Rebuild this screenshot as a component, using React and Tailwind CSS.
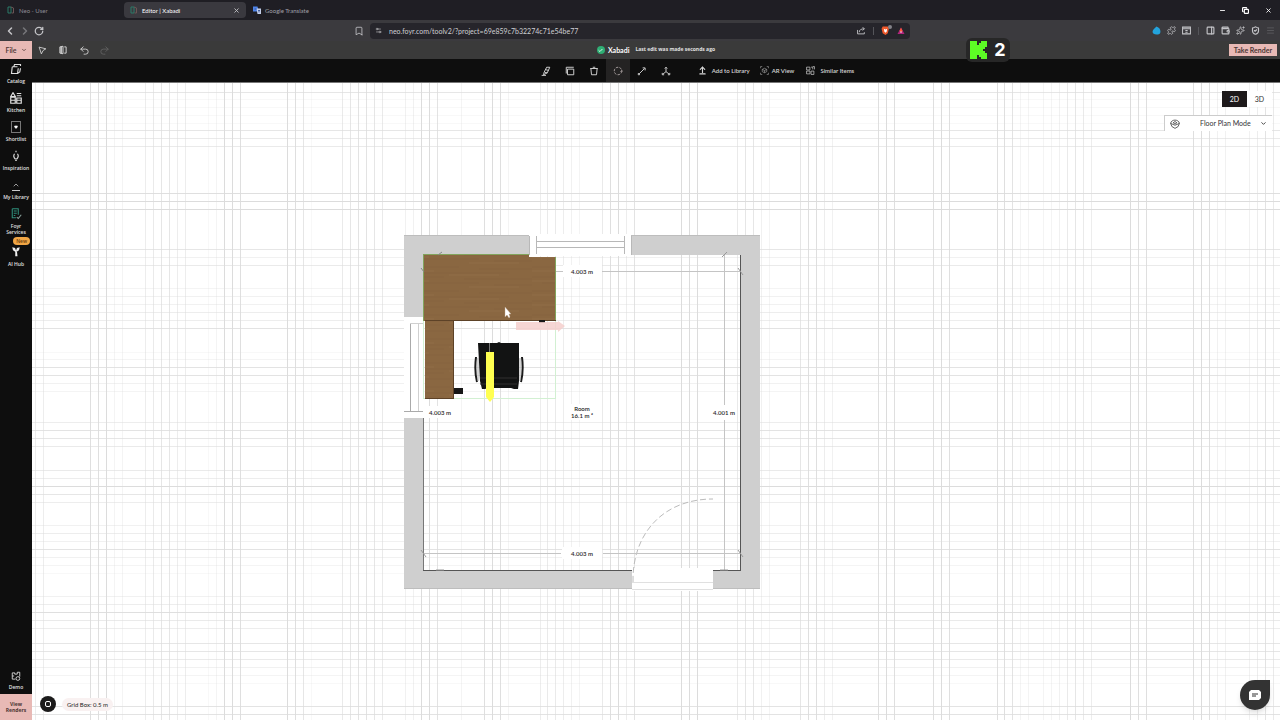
import { useState } from 'react';
import {
  ArrowUpFromLine,
  Bookmark,
  Check,
  ChevronDown,
  ChevronLeft,
  ChevronRight,
  ChevronUp,
  Copy,
  Heart,
  Menu,
  Minus,
  PanelRight,
  Puzzle,
  Redo2,
  RotateCw,
  Settings2,
  ShieldCheck,
  Sparkles,
  Undo2,
  Wallet,
  X
} from 'lucide-react';

// Strong and faint grid lines: [position, opacity]
const verticalLines = [
  [35, 0.5], [43, 0.5], [90, 0.9], [98, 0.9], [106, 1], [114, 0.3], [122, 0.3], [145, 0.5],
  [153, 0.6], [161, 0.7], [169, 0.7], [177, 0.5], [185, 0.5], [208, 0.2], [216, 0.3], [224, 1],
  [232, 1], [240, 0.9], [287, 1], [295, 0.9], [303, 0.7], [311, 0.2], [342, 0.6], [350, 0.7],
  [358, 0.8], [366, 0.8], [374, 0.7], [382, 0.6], [405, 0.4], [413, 0.4], [421, 1], [429, 1],
  [437, 0.8], [461, 0.3], [484, 0.9], [492, 1], [500, 0.9], [508, 0.3], [540, 0.5], [547, 0.6],
  [555, 0.6], [563, 0.5], [571, 0.4], [579, 0.3], [602, 0.6], [610, 0.9], [618, 1], [626, 0.5],
  [634, 0.8], [681, 1], [689, 1], [697, 1], [737, 0.6], [745, 0.7], [753, 0.7], [761, 0.4],
  [769, 0.3], [800, 0.7], [808, 0.9], [816, 0.9], [824, 0.5], [832, 0.4], [878, 0.9], [886, 1],
  [894, 0.9], [933, 0.9], [941, 1], [949, 0.9], [997, 0.9], [1004, 0.9], [1012, 0.8], [1020, 0.3],
  [1028, 0.3], [1043, 0.3], [1051, 0.3], [1059, 0.4], [1067, 0.6], [1075, 0.7], [1083, 0.6],
  [1091, 0.5], [1130, 1], [1138, 0.9], [1146, 0.9], [1193, 0.9], [1201, 1], [1209, 0.9],
  [1217, 0.4], [1225, 0.4], [1249, 0.4], [1257, 0.5], [1265, 0.8], [1273, 0.6]
];

const horizontalLines = [
  [92, 0.7], [99, 0.2], [107, 0.2], [115, 0.2], [123, 0.2], [130, 0.7], [138, 0.6], [146, 0.6],
  [193, 0.9], [201, 1], [209, 1], [249, 0.7], [257, 0.4], [265, 0.6], [288, 0.3], [296, 0.4],
  [304, 0.4], [312, 0.5], [320, 0.5], [328, 0.8], [352, 0.2], [359, 0.3], [367, 0.8], [375, 0.8],
  [383, 0.4], [391, 0.3], [422, 0.5], [430, 0.8], [438, 0.7], [446, 0.6], [470, 0.6], [478, 0.5],
  [486, 1], [494, 0.7], [502, 0.5], [525, 0.4], [533, 0.5], [541, 0.4], [549, 0.8], [557, 0.4],
  [565, 0.3], [573, 0.2], [596, 0.4], [604, 0.5], [612, 0.9], [620, 0.6], [628, 0.5], [643, 0.7],
  [651, 0.7], [659, 0.6], [667, 0.4], [675, 0.3], [683, 0.2], [706, 0.8], [714, 0.8]
];

const CabinetIcon = ({ className }) => (
  <svg viewBox="0 0 16 16" className={className} fill="none" stroke="currentColor" strokeWidth="1.6">
    <path d="M1 6l3-5 3 5zM1 7h6v8H1zM1 11h6M9 8h6v7H9zM9 11h6M9 5h6M9 2h6" />
  </svg>
);

const ServicesIcon = ({ className }) => (
  <svg viewBox="0 0 16 16" className={className} fill="none" stroke="#2f8f7b" strokeWidth="1.4">
    <path d="M3 1h8v8M3 1v12h5M5 4h4M5 7h4M5 10h2" />
    <path d="M9 12l2 2 4-5" stroke="#8aa39d" />
  </svg>
);

const CatalogIcon = ({ className }) => (
  <svg viewBox="0 0 16 16" className={className} fill="none" stroke="currentColor" strokeWidth="1.5">
    <path d="M5 5l1-3h8v2M14 7l-1 5-3 2M3 5h7M3 5l-1 9h8l1-7" />
  </svg>
);

const PendantIcon = ({ className }) => (
  <svg viewBox="0 0 16 16" className={className} fill="none" stroke="currentColor" strokeWidth="1.5">
    <path d="M8 1v2M6 5c-2 3-1 5 1 7h2c2-2 3-4 1-7M7 14h2" />
  </svg>
);

const HubIcon = ({ className }) => (
  <svg viewBox="0 0 16 16" className={className} fill="#eee">
    <path d="M7 6h2l1 9H7zM3 3l4 1v5L4 7zM13 3L9 4v5l3-2z" />
  </svg>
);

const DemoIcon = ({ className }) => (
  <svg viewBox="0 0 16 16" className={className} fill="none" stroke="currentColor" strokeWidth="1.4">
    <path d="M2 3h4v2h4V2h4v7M2 3v10h5M2 8h3" />
    <circle cx="11" cy="12" r="3" />
  </svg>
);

const AxisIcon = ({ className }) => (
  <svg viewBox="0 0 16 16" className={className} fill="none" stroke="currentColor" strokeWidth="1.5">
    <path d="M8 2v7L3 13M8 9l5 4M6 4l2-2 2 2M2 11v3h3M14 11v3h-3" />
  </svg>
);

const ResizeIcon = ({ className }) => (
  <svg viewBox="0 0 16 16" className={className} fill="none" stroke="currentColor" strokeWidth="1.5">
    <path d="M4 12l8-8M9 3h4v4" />
    <path d="M2 12h2v2H2z" />
  </svg>
);

const BrushIcon = ({ className }) => (
  <svg viewBox="0 0 16 16" className={className} fill="none" stroke="currentColor" strokeWidth="1.5">
    <path d="M9 2h5l-4 9-6 3 1-4zM8 6l4 1M6 10l4 1M1 15h7" />
  </svg>
);

const DuplicateIcon = ({ className }) => (
  <svg viewBox="0 0 16 16" className={className} fill="none" stroke="currentColor" strokeWidth="1.5">
    <path d="M2 12V2h12M4 5h10v9H4z" />
  </svg>
);

const BinIcon = ({ className }) => (
  <svg viewBox="0 0 16 16" className={className} fill="none" stroke="currentColor" strokeWidth="1.5">
    <path d="M2 4h12M6 2h4M3 4l1 10h8l1-10" />
  </svg>
);

const RotateIcon = ({ className }) => (
  <svg viewBox="0 0 16 16" className={className} fill="none" stroke="currentColor" strokeWidth="1.6">
    <circle cx="8" cy="8" r="6" strokeDasharray="4 2" />
    <path d="M12 9l2-2 2 2" />
  </svg>
);

const ArViewIcon = ({ className }) => (
  <svg viewBox="0 0 16 16" className={className} fill="none" stroke="currentColor" strokeWidth="1.2">
    <path d="M1 4V1h3M12 1h3v3M15 12v3h-3M4 15H1v-3M8 4l4 2v4l-4 2-4-2V6zM4 6l4 2 4-2M8 8v4" />
  </svg>
);

const SwapIcon = ({ className }) => (
  <svg viewBox="0 0 16 16" className={className} fill="none" stroke="currentColor" strokeWidth="1.2">
    <path d="M1 2h6v5H1zM1 9h6v5H1zM9 2h3v4M9 9h5v6H9zM12 1h3v5" />
  </svg>
);

const CursorIcon = ({ className }) => (
  <svg viewBox="0 0 16 16" className={className} fill="none" stroke="currentColor" strokeWidth="1.6">
    <path d="M2 2l12 3-5 3-3 6z" />
  </svg>
);

const DoorIcon = ({ className }) => (
  <svg viewBox="0 0 16 16" className={className} fill="none" stroke="currentColor" strokeWidth="1.6">
    <path d="M3 3l5-1v12l-5-1zM10 3h3v10h-3" />
    <path d="M5 3v10" strokeWidth="2.500" />
  </svg>
);

const ShareIcon = ({ className }) => (
  <svg viewBox="0 0 16 16" className={className} fill="none" stroke="currentColor" strokeWidth="1.6">
    <path d="M1 7v7h12v-3M4 11c0-4 3-6 9-6M10 2l3 3-3 3" />
  </svg>
);

const CalendarIcon = ({ className }) => (
  <svg viewBox="0 0 16 16" className={className} fill="none" stroke="currentColor" strokeWidth="1.8">
    <path d="M1 2h14v12H1zM1 5h14M6 8h4M6 11h4" />
  </svg>
);

const ModeIcon = ({ className }) => (
  <svg viewBox="0 0 16 16" className={className} fill="none" stroke="currentColor" strokeWidth="1.2">
    <path d="M1 7c1-7 13-7 14 0M1 7l7 3 7-3M1 7l2 5 5 3 5-3 2-5M5 6l3-2 3 2-3 2z" />
  </svg>
);

const FoyrIcon = ({ className }) => (
  <svg viewBox="0 0 16 16" className={className} fill="none" strokeWidth="2">
    <path d="M2 2h6v12H2z" stroke="#2b7a68" />
    <path d="M8 2l5 2v10H9" stroke="#6d5555" />
  </svg>
);

const sidebarItems = [
  { label: 'Catalog', icon: CatalogIcon },
  { label: 'Kitchen', icon: CabinetIcon },
  { label: 'Shortlist', icon: Heart, boxed: true },
  { label: 'Inspiration', icon: PendantIcon },
  { label: 'My Library', icon: ChevronUp, underlined: true },
  { label: 'Foyr Services', icon: ServicesIcon },
  { label: 'AI Hub', icon: HubIcon, badge: 'New' }
];

const tools = [
  { label: 'Material', icon: BrushIcon },
  { label: 'Duplicate', icon: DuplicateIcon },
  { label: 'Delete', icon: BinIcon },
  { label: 'Rotate', icon: RotateIcon, active: true },
  { label: 'Resize', icon: ResizeIcon },
  { label: 'Move', icon: AxisIcon }
];

function BrowserChrome() {
  return (
    <header className="text-[#c4c4c8]">
      {/* Tabs */}
      <div className="flex h-5 items-center bg-[#1f1e24] text-[6px]">
        <button className="flex w-[124px] items-center gap-1 pl-[7px] text-[#8d8d94]">
          <FoyrIcon className="h-2 w-2" />
          Neo - User
        </button>
        <div className="flex h-4 w-[122px] items-center rounded-sm bg-[#3a393f] px-[6px]">
          <button className="flex flex-1 items-center gap-1 text-white">
            <FoyrIcon className="h-2 w-2" />
            Editor | Xabadi
          </button>
          <button aria-label="Close tab"><X className="h-[7px] w-[7px]" strokeWidth={3} /></button>
        </div>
        <button className="flex items-center gap-1 pl-[7px] text-[#a0a0a8]">
          <svg viewBox="0 0 16 16" className="h-2 w-2">
            <path d="M0 1h9l3 10H0z" fill="#4e83e8" />
            <path d="M7 5h9v11H9z" fill="#c3cee8" />
            <path d="M3 6h4M10 9h4M12 9v4" stroke="#26448a" strokeWidth="1.5" />
          </svg>
          Google Translate
        </button>
        <div className="ml-auto flex items-center gap-4 pr-2 text-white">
          <button aria-label="Minimize"><Minus className="h-[7px] w-[7px]" strokeWidth={3} /></button>
          <button aria-label="Restore"><Copy className="h-[7px] w-[7px]" strokeWidth={4} /></button>
          <button aria-label="Close"><X className="h-[7px] w-[7px]" strokeWidth={3} /></button>
        </div>
      </div>

      {/* Address bar */}
      <div className="grid h-[21px] grid-cols-[370fr_540fr_370fr] items-center bg-[#3b3a3e]">
        <div className="flex items-center gap-[3px] pl-1 pr-[6px]">
          <button aria-label="Back"><ChevronLeft className="h-3 w-3" strokeWidth={3} /></button>
          <button aria-label="Forward" className="text-[#77777b]"><ChevronRight className="h-3 w-3" strokeWidth={3} /></button>
          <button aria-label="Reload"><RotateCw className="h-[10px] w-[10px]" strokeWidth={3} /></button>
          <button aria-label="Bookmark" className="ml-auto"><Bookmark className="h-[10px] w-[10px]" strokeWidth={2} /></button>
        </div>
        <div className="flex h-4 items-center gap-[7px] rounded bg-[#26252b] px-[5px]">
          <Settings2 className="h-[7px] w-[7px]" />
          <input
            aria-label="Address"
            defaultValue="neo.foyr.com/toolv2/?project=69e859c7b32274c71e54be77"
            className="min-w-0 flex-1 bg-transparent text-[7px] leading-[10px] text-[#cfcfd3] outline-none"
          />
          <button aria-label="Share"><ShareIcon className="h-[9px] w-[9px]" /></button>
          <span className="h-2 w-px bg-[#55555a]" />
          <button aria-label="Shields" className="relative">
            <svg viewBox="0 0 16 16" className="h-[9px] w-[9px]">
              <path d="M3 1h9l2 4-2 8-4 3-5-3-2-8z" fill="#f0592b" />
              <path d="M5 5l3 1 3-1-1 5-2 2-2-2z" fill="#fff" />
            </svg>
            <span className="absolute -right-[2px] -top-[1px] h-1 w-1 rounded-full bg-[#83838a]" />
          </button>
          <button aria-label="Rewards">
            <svg viewBox="0 0 16 16" className="h-2 w-2">
              <path d="M8 1l7 13H1z" fill="#b0247c" />
              <path d="M8 1L5 8l3 2 3-2z" fill="#ff5a36" />
              <path d="M8 8l2 3H6z" fill="#fff" />
            </svg>
          </button>
        </div>
        <div className="flex items-center justify-end gap-[6px] pr-[5px]">
          <button aria-label="Downloads">
            <svg viewBox="0 0 16 16" className="h-[9px] w-[9px]"><path d="M8 1c5 2 7 5 7 9s-3 5-7 5-7-2-7-5 3-5 7-9z" fill="#23a3dd" /></svg>
          </button>
          <button aria-label="Extensions"><Puzzle className="h-[9px] w-[9px]" strokeWidth={2} /></button>
          <button aria-label="Saved"><CalendarIcon className="h-[9px] w-[9px]" /></button>
          <span className="mx-px h-2 w-px bg-[#55555a]" />
          <button aria-label="Side panel"><PanelRight className="h-[9px] w-[9px]" strokeWidth={3} /></button>
          <button aria-label="Wallet"><Wallet className="h-[9px] w-[9px]" strokeWidth={3} /></button>
          <button aria-label="Assistant"><Sparkles className="h-[9px] w-[9px]" strokeWidth={2} /></button>
          <button aria-label="VPN"><ShieldCheck className="h-[9px] w-[9px]" strokeWidth={3} /></button>
          <button aria-label="Menu" className="text-[#626266]"><Menu className="h-[9px] w-[9px]" strokeWidth={2} /></button>
        </div>
      </div>
    </header>
  );
}

function ProjectBar() {
  return (
    <div className="relative grid h-[18px] grid-cols-[1fr_auto_1fr] items-center bg-[#3a3a3a] text-[#d0d0d0]">
      <div className="flex h-full items-center gap-[11px]">
        <button className="flex h-full w-8 items-center justify-center gap-1 bg-[#e8b9b5] text-[7px] font-semibold text-[#4c3634]">
          File
          <ChevronDown className="h-[6px] w-[6px]" strokeWidth={3} />
        </button>
        <button aria-label="Select" className="-ml-[5px]"><CursorIcon className="h-[9px] w-[9px]" /></button>
        <button aria-label="Doors"><DoorIcon className="h-[10px] w-[10px]" /></button>
        <button aria-label="Undo"><Undo2 className="h-[11px] w-[11px]" /></button>
        <button aria-label="Redo" className="-ml-[2px] text-[#606060]"><Redo2 className="h-[11px] w-[11px]" /></button>
      </div>
      <div className="flex items-center gap-[3px] pl-8">
        <span className="flex h-2 w-2 items-center justify-center rounded-full bg-[#2fae74]">
          <Check className="h-[5px] w-[5px] text-white" strokeWidth={4} />
        </span>
        <h1 className="text-[7px] font-bold text-white">Xabadi</h1>
        <p className="pl-[3px] font-['Open_Sans',sans-serif] text-[5px] font-bold text-[#e0e0e0]">Last edit was made seconds ago</p>
      </div>
      <button className="mr-[3px] h-3 w-12 justify-self-end bg-[#e8b9b5] text-[7px] font-bold leading-3 text-[#4c3634]">
        Take Render
      </button>

      {/* Key counter */}
      <div className="absolute -top-[3px] right-[270px] z-10 flex h-6 w-11 items-center justify-center gap-[7px] rounded-md bg-[#272727]">
        <svg viewBox="0 0 17 18" className="h-[18px] w-[17px]" shapeRendering="crispEdges">
          <path d="M0 0h7v4h2V2h2V0h6v6h-2v2h-2v2h2v2h2v6h-6v-2H9v-2H7v4H0z" fill="#5dfb25" />
        </svg>
        <span className="font-['Inter',sans-serif] text-[18px] font-bold leading-5 text-white">2</span>
      </div>
    </div>
  );
}

function Toolbar() {
  return (
    <div className="flex h-6 items-center justify-center border-b border-[#777] bg-[#0e0e0e] pl-[76px] text-[6px] font-semibold text-[#d6d6d6]">
      {tools.map(({ label, icon: Icon, active }) => (
        <button
          key={label}
          aria-label={label}
          className={`flex h-full w-6 items-center justify-center ${active ? 'bg-[#242323] text-[#a39a9a]' : ''}`}
        >
          <Icon className="h-[10px] w-[10px]" />
        </button>
      ))}
      <button className="ml-5 flex items-center gap-[5px]">
        <ArrowUpFromLine className="h-[9px] w-[9px]" strokeWidth={3} />
        Add to Library
      </button>
      <button className="ml-[10px] flex items-center gap-[3px]">
        <ArViewIcon className="h-[9px] w-[9px] text-[#999]" />
        AR View
      </button>
      <button className="ml-3 flex items-center gap-[5px]">
        <SwapIcon className="h-[9px] w-[9px]" />
        Similar Items
      </button>
    </div>
  );
}

function Sidebar() {
  return (
    <nav className="flex w-8 shrink-0 flex-col bg-[#0e0e0e] text-center font-['Open_Sans',sans-serif] text-[5px] font-semibold leading-[6px] text-[#e0e0e0]">
      <div className="flex flex-col pt-1">
        {sidebarItems.map(({ label, icon: Icon, boxed, underlined, badge }) => (
          <button
            key={label}
            className={`relative flex min-h-[29px] flex-col items-center px-px ${badge ? 'mt-2 gap-1' : 'gap-[3px]'}`}
          >
            <span
              className={`flex h-3 items-center justify-center ${boxed ? 'w-[10px] border border-[#777]' : ''} ${underlined ? 'w-2 border-b border-[#ccc]' : ''}`}
            >
              <Icon className={boxed ? 'h-1 w-1 fill-white' : 'h-3 w-3'} />
            </span>
            <span className="w-0 min-w-full">{label}</span>
            {badge && (
              <span className="absolute -top-[8px] right-[2px] rounded-full bg-[#f0a545] px-[3px] py-[1px] text-[5px] text-[#6b3d0a]">
                {badge}
              </span>
            )}
          </button>
        ))}
      </div>
      <button className="mt-auto flex flex-col items-center gap-[3px] pb-1">
        <DemoIcon className="h-[10px] w-[10px]" />
        Demo
      </button>
      <button className="h-[26px] bg-[#e8b9b5] px-1 text-[5px] font-bold leading-[6px] text-[#4c3634]">
        View Renders
      </button>
    </nav>
  );
}

function DimensionLabel({ x, y, children }) {
  return (
    <text x={x} y={y} textAnchor="middle" className="fill-[#222] text-[6px] font-semibold">
      {children}
    </text>
  );
}

function FloorPlan() {
  return (
    <svg
      viewBox="32 83 1248 637"
      preserveAspectRatio="xMidYMid slice"
      className="absolute inset-0 h-full w-full"
      role="img"
      aria-label="Floor plan"
    >
      <defs>
        <pattern id="wood" width="133" height="24" patternUnits="userSpaceOnUse">
          <rect width="133" height="24" fill="#8a6741" />
          <path
            d="M0 3h60M80 5h53M20 9h90M0 13h45M65 15h68M10 19h70M95 21h38"
            stroke="#7c5a36"
            strokeWidth="1"
            opacity="0.35"
          />
          <path d="M0 7h35M50 11h50M0 17h30M70 23h50" stroke="#96724a" strokeWidth="1" opacity="0.5" />
        </pattern>
      </defs>

      {/* Grid */}
      <g fill="#dcdcdc">
        {verticalLines.map(([x, opacity]) => (
          <rect key={x} x={x} y="83" width="1" height="637" opacity={opacity} />
        ))}
        {horizontalLines.map(([y, opacity]) => (
          <rect key={y} x="32" y={y} width="1248" height="1" opacity={opacity} />
        ))}
      </g>

      {/* Walls */}
      <path
        d="M404 235h125v20H423v62h-19zM631 235h129v354h-47v-19h28V255H631zM404 418h19v152h209v19H404z"
        fill="#cfcfcf"
      />
      <path d="M404 235.500h125M631 235.500h129M404 588.500h228M713 588.500h47" stroke="#bdbdbd" />
      <path d="M740.500 255v315M423 570.500h209M713 570.500h28" stroke="#555" fill="none" />
      <path d="M423.500 418v152" stroke="#777" />

      {/* Windows */}
      <rect x="529" y="234" width="102" height="22" fill="#fff" />
      <path d="M529.500 236v19M536.500 236v18M624.500 236v18M631.500 236v19M536 241.500h88M536 247.500h88" stroke="#b8b8b8" />
      <rect x="404" y="317" width="20" height="101" fill="#fff" />
      <path d="M410.500 323v88M404 411.500h19" stroke="#aaa" />
      <path d="M418.500 323v88M410 323.500h13" stroke="#d0d0d0" />

      {/* Door */}
      <rect x="632" y="568" width="81" height="23" fill="#fff" />
      <path d="M632 582.500h81M632 589.500h81" stroke="#e0e0e0" />
      <path d="M633 582C632 535 662 499 713 499" fill="none" stroke="#bbb" strokeDasharray="6 3" />

      {/* Dimensions */}
      <g stroke="#c4c4c4">
        <path d="M556 271.500h7M602 271.500h139M423 553.500h138M603 553.500h138M724.500 255v150M724.500 420v150" />
        <path d="M722 257l5-5M738 268l5 7M738 550l5 7M421 550l5 7M436 570h8M720 570h8" stroke="#999" />
      </g>
      <rect x="563" y="265" width="39" height="12" fill="#fff" />
      <rect x="562" y="547" width="40" height="12" fill="#fff" />
      <rect x="571" y="404" width="22" height="16" fill="#fff" />
      <rect x="713" y="406" width="22" height="12" fill="#fff" />
      <rect x="429" y="406" width="22" height="12" fill="#fff" />
      <DimensionLabel x="582" y="274">4.003 m</DimensionLabel>
      <DimensionLabel x="582" y="556">4.003 m</DimensionLabel>
      <DimensionLabel x="440" y="415">4.003 m</DimensionLabel>
      <DimensionLabel x="724" y="415">4.001 m</DimensionLabel>
      <DimensionLabel x="582" y="411">Room</DimensionLabel>
      <DimensionLabel x="582" y="418">16.1 m ²</DimensionLabel>

      {/* Desk */}
      <path d="M423.500 255v144M423 398.500h133M555.500 321v78" stroke="#d2f0d2" fill="none" />
      <path d="M423 254h106v3h27v64H423z" fill="url(#wood)" />
      <rect x="425" y="321" width="29" height="78" fill="url(#wood)" />
      <path d="M425 320.500h131M453.500 321v78M425 398.500h29" stroke="#5d4227" fill="none" />
      <path d="M423.500 255v66M423 254.500h106M555.500 257v63" stroke="#82a45c" fill="none" />
      <path d="M421 268l3 4M438 255l4-3" stroke="#888" />
      <rect x="454" y="388" width="9" height="6" fill="#161616" />
      <rect x="539" y="320" width="6" height="3" fill="#161616" />

      {/* Chair */}
      <path d="M478 343h19l2-1 2 1h18v38l-1 8h-4l-3-1h-23l-3 1h-3l-2-8z" fill="#121313" />
      <path d="M476 357c-1 8-1 17 1 25M522 357c1 8 1 17-1 25" stroke="#1b1b1b" strokeWidth="2" fill="none" />
      <path d="M478 358v23M520 358v23" stroke="#aaa" fill="none" />
      <path d="M480 378h37M480 384h37" stroke="#303030" />

      {/* Move handles */}
      <path d="M489.500 343v10" stroke="#777" />
      <path d="M486 352h8v45l-4 5-4-5z" fill="#ffff50" />
      <path d="M516 322h42v-1l7 5-7 6v-2h-42z" fill="#f4cfcd" opacity="0.85" />

      {/* Pointer */}
      <path d="M505 307v10l2-2 2 3 1-1-1-3h2z" fill="#fff" stroke="#bba58a" strokeWidth="0.4" />
    </svg>
  );
}

export default function App() {
  const [view, setView] = useState('2D');

  return (
    <div className="flex min-h-screen flex-col overflow-hidden bg-white font-['Lato',sans-serif]">
      <BrowserChrome />
      <ProjectBar />
      <div className="flex flex-1">
        <Sidebar />
        <div className="flex min-w-0 flex-1 flex-col">
          <Toolbar />
          <main className="relative flex-1">
            <FloorPlan />

            {/* View controls */}
            <div className="absolute right-2 top-2 flex flex-col items-end gap-2 text-[7px] text-[#333]">
              <div className="flex bg-white">
                {['2D', '3D'].map((mode) => (
                  <button
                    key={mode}
                    onClick={() => setView(mode)}
                    className={`h-4 w-[25px] ${view === mode ? 'bg-[#1d191a] text-white' : 'bg-white'}`}
                  >
                    {mode}
                  </button>
                ))}
              </div>
              <label className="flex h-4 w-[108px] items-center border-l border-t border-[#ccc] bg-white px-[5px]">
                <ModeIcon className="h-[10px] w-[10px]" />
                <select
                  aria-label="View mode"
                  className="min-w-0 flex-1 appearance-none bg-transparent pl-5 text-[7px] outline-none"
                >
                  <option>Floor Plan Mode</option>
                </select>
                <ChevronDown className="h-[7px] w-[7px]" strokeWidth={3} />
              </label>
            </div>

            {/* Grid size */}
            <div className="absolute bottom-2 left-2 flex items-center gap-[6px]">
              <button aria-label="Recenter" className="flex h-4 w-4 items-center justify-center rounded-full bg-[#1c1b1b]">
                <span className="h-[6px] w-[6px] rounded-xs border border-white" />
              </button>
              <p className="rounded-full bg-[#f9f1f1] px-[5px] py-[2px] text-[6px] leading-[9px] text-[#222]">
                Grid Box: 0.5 m
              </p>
            </div>

            <button
              aria-label="Chat"
              className="absolute bottom-[10px] right-[10px] flex h-[30px] w-[30px] items-center justify-center rounded-full rounded-tr-sm bg-[#333] shadow-md"
            >
              <svg viewBox="0 0 12 10" className="h-[10px] w-3">
                <path d="M2 0h8l2 2v6l-2 2H0V2z" fill="#fff" />
                <path d="M3 4h6M3 6h4" stroke="#333" />
              </svg>
            </button>
          </main>
        </div>
      </div>
    </div>
  );
}
